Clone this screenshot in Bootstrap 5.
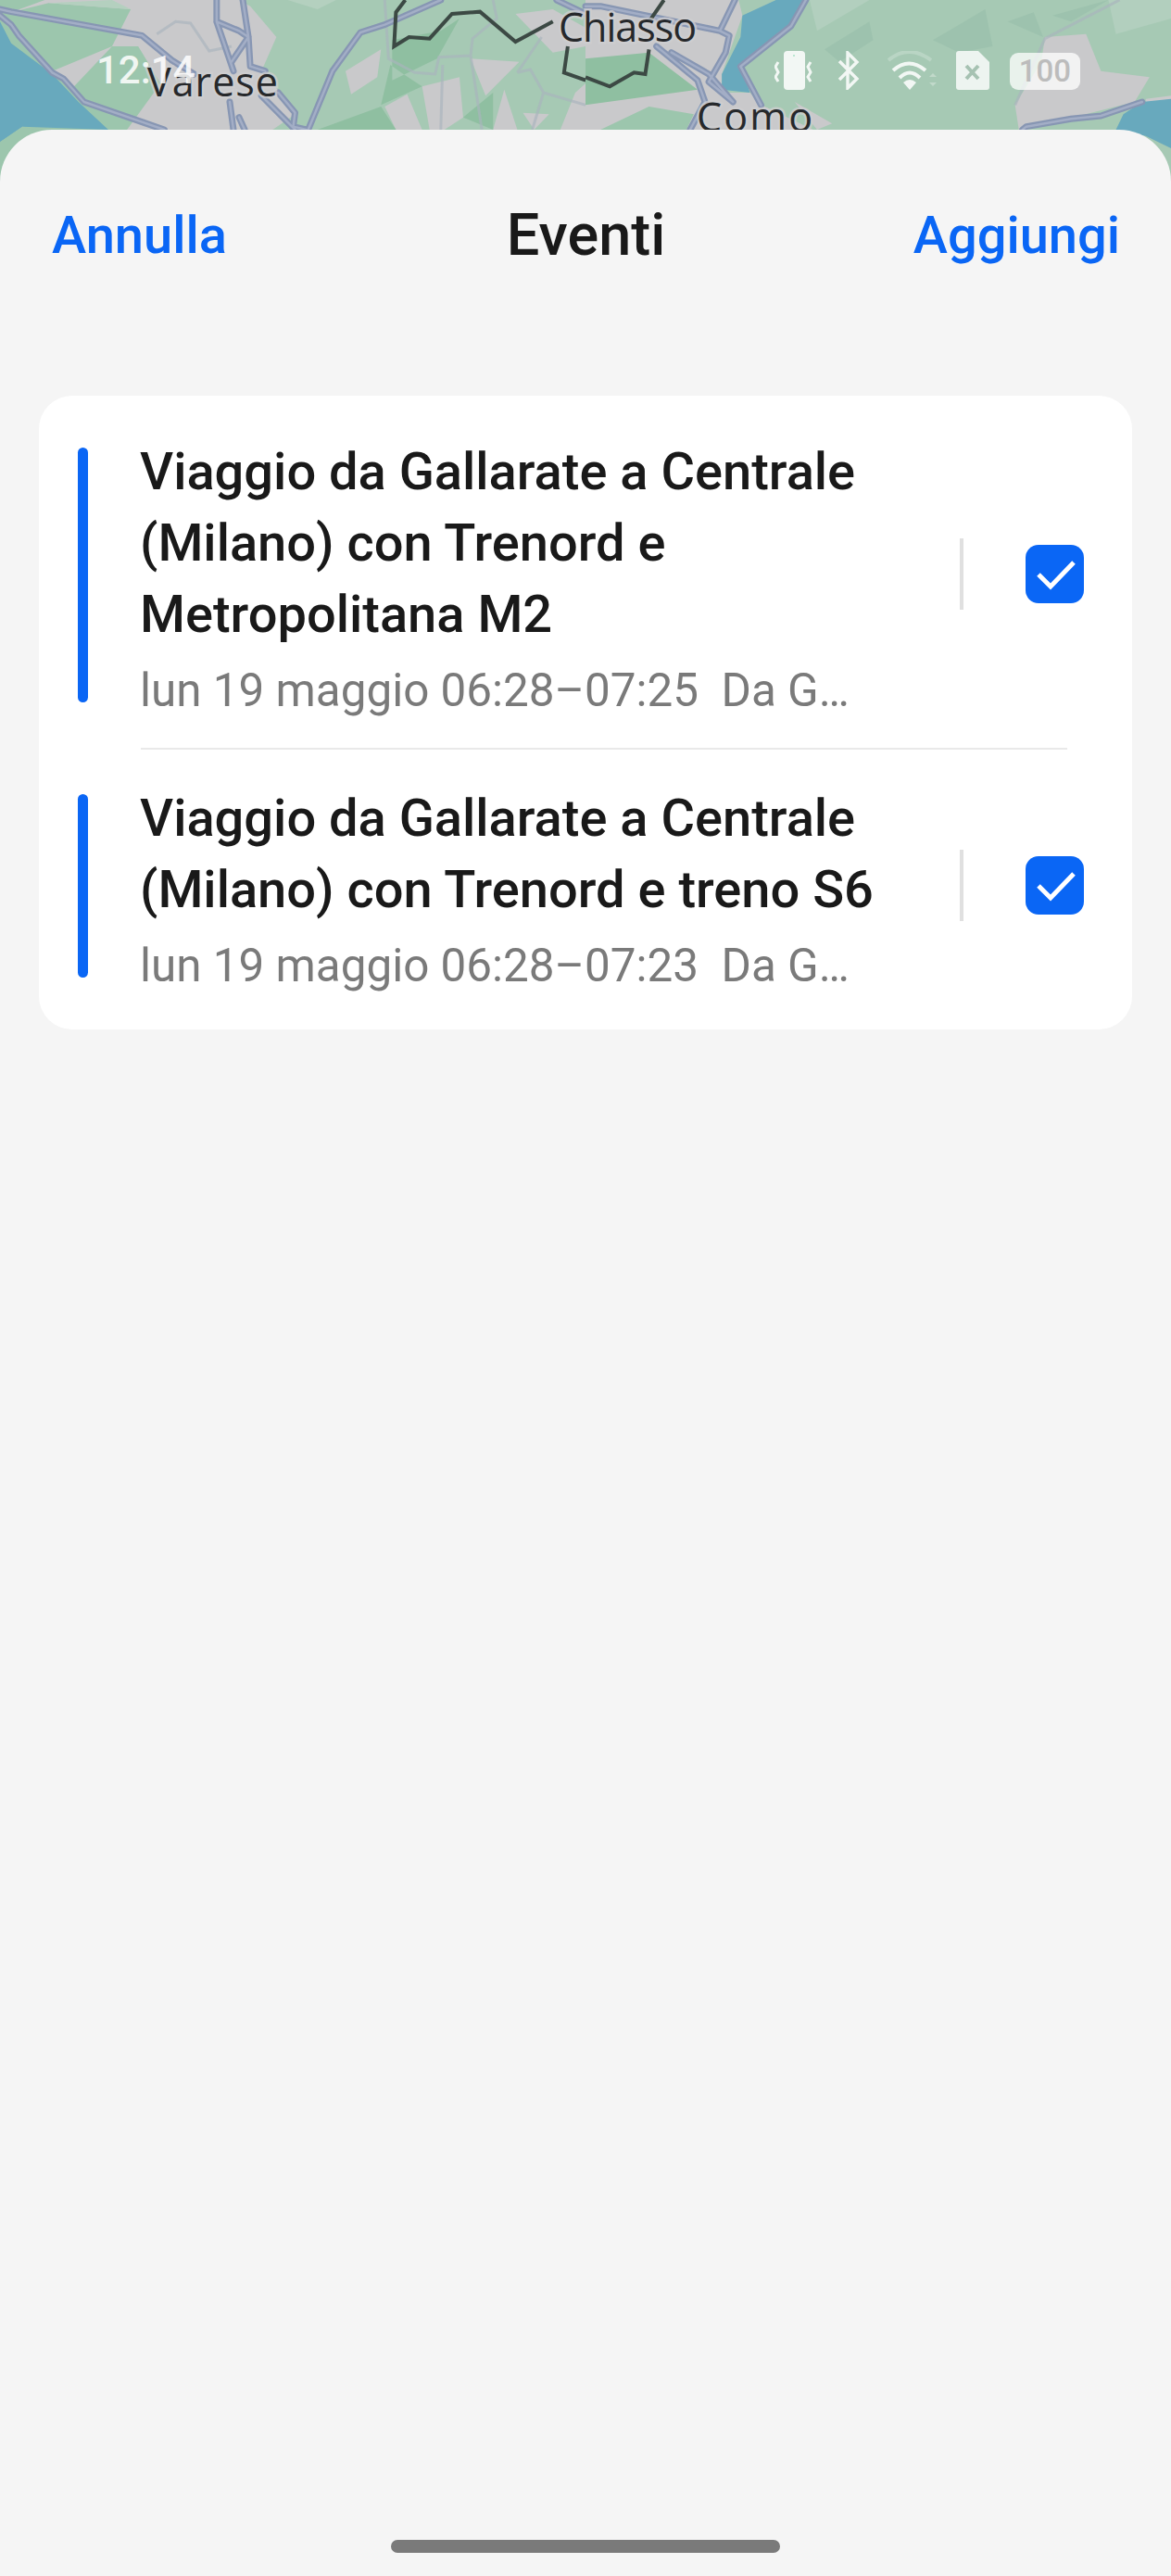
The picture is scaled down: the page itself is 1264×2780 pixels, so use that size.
<!DOCTYPE html>
<html lang="it">
<head>
    <meta charset="UTF-8">
    <meta name="viewport" content="width=device-width, initial-scale=1.0">
    <title>Eventi</title>
    <link rel="stylesheet" href="https://cdn.jsdelivr.net/npm/bootstrap@5.3.3/dist/css/bootstrap.min.css">
    <style>
        html, body { height: 2780px; overflow: hidden; }
        body {
            background: #f5f5f5;
            font-family: Roboto, "Liberation Sans", sans-serif;
            color: #191919;
        }
        .map-back { position: absolute; top: 0; left: 0; width: 1264px; height: 220px; }
        .map-back text { font-family: "Open Sans", sans-serif; font-size: 43px; fill: #26282b; stroke: #cfcfd1; stroke-width: 5px; paint-order: stroke; stroke-opacity: .75; }
        .map-back defs path { vector-effect: non-scaling-stroke; }
        .map-road { fill: none; stroke: #8796b3; stroke-width: 7; stroke-linejoin: round; stroke-linecap: round; }
        .map-road-in { fill: none; stroke: #a3aec6; stroke-width: 2.5; stroke-linejoin: round; stroke-linecap: round; }
        .map-faint { fill: none; stroke: #a9b3bd; stroke-width: 3; stroke-opacity: .65; vector-effect: non-scaling-stroke; }
        .map-border { fill: none; stroke: #3c4944; stroke-width: 4; vector-effect: non-scaling-stroke; }
        .status-row { position: absolute; top: 55px; left: 104px; width: 1062px; height: 42px; z-index: 2; color: #fff; }
        .status-time { font-size: 42px; line-height: 42px; font-weight: 500; opacity: .85; }
        .status-icons svg { display: block; height: 42px; }
        .status-batt { width: 76px; height: 40px; margin-top: 2px; background: rgba(255,255,255,.75); border-radius: 9px; color: #bcbcbc; font-size: 33px; line-height: 40px; font-weight: 500; text-align: center; }
        .sheet { position: relative; margin-top: 140px; height: 2640px; background: #f5f5f5; border-radius: 56px 56px 0 0; z-index: 1; }
        .sheet-head { padding: 79px 55px 0 56px; height: 287px; font-size: 56px; line-height: 70px; font-weight: 500; }
        .sheet-head a { color: #0a66f5; text-decoration: none; }
        .sheet-title { font-size: 63px; font-weight: 500; }
        .event-card { margin: 0 42px; background: #fff; border-radius: 36px; }
        .event-item { padding: 44px 0 35px 42px; }
        .event-line + .event-item { padding-top: 36px; padding-bottom: 42px; }
        .event-bar { flex: 0 0 11px; margin: 12px 56px 14px 0; background: #0a66f5; border-radius: 6px; }
        .event-body { width: 830px; }
        .event-name { font-size: 56px; line-height: 77px; font-weight: 500; margin: 0; }
        .event-when { font-size: 49.4px; line-height: 54px; margin-top: 16px; color: #7a7a7a; white-space: pre; }
        .event-sep { width: 4px; height: 77px; background: #e0e0e0; margin-left: 55px; margin-bottom: 4px; }
        .event-check { width: 63px; height: 63px; margin-left: 67px; margin-bottom: 4px; background: #0a66f5; border-radius: 14px; }
        .event-check svg { display: block; width: 63px; height: 63px; }
        .event-line { height: 2px; margin: 0 70px 0 110px; background: #e9e9e9; }
        .home-bar { width: 420px; height: 14px; bottom: 25px; left: 422px; position: absolute; background: #7a7a7a; border-radius: 7px; }
    </style>
</head>
<body>

<svg class="map-back" viewBox="0 0 1264 220" aria-hidden="true">
    <defs>
        <path id="roads-left" d="M0 30L30 38L380 115L460 195L520 240M0 50L30 80L50 115L140 235L170 255L225 330L380 395L440 420M580 0L580 70L625 230M650 0L665 120L670 215L710 230M580 70L640 100L665 120L620 200M615 330L625 420M640 380L655 420M700 310L790 420M745 300L790 365L785 410L820 420M825 420L890 230L965 105L1030 80L1180 0M1490 0L1568 45"/>
        <path id="roads-right" d="M400 0L360 100L385 115L375 170L330 265L395 330M590 0L550 85L415 215L470 340M190 150L300 260L320 330L280 420M230 170L330 240L395 330M0 20L40 20L360 100M1490 330L1380 375L1300 385L1180 410L1170 420"/>
    </defs>
    <rect width="1264" height="220" fill="#a6c9b4"/>
    <!-- left half, coordinates from the 2.48 / 3 crop -->
    <g transform="scale(.4032 .3333)">
        <path fill="#9cc6ad" d="M0 0H640V660H0Z"/>
        <path fill="#c9c9cb" d="M30 40L130 10L350 30L300 150L140 230L190 290L300 150L370 150L430 270L340 420H730L790 370L750 300L700 230L740 120L670 20L640 0H350L120 0Z"/>
        <path fill="#c9c9cb" d="M925 230L1020 160L1010 250L940 305Z M1030 345L1090 305L1130 420H1060Z M1130 280L1230 250L1240 380L1190 420H1150Z M1320 420L1350 290L1385 420Z M1260 190L1390 200L1300 310Z M1400 365L1470 370L1430 420Z M1380 45L1480 30L1568 90V150L1480 170L1440 120Z M1540 300L1568 270V420H1500Z M880 420L935 395L940 420Z"/>
        <path fill="#8fbfa1" d="M1050 130L1180 100L1230 60L1170 190L1050 260Z M1020 340L1130 280L1080 240L1045 210Z M850 420L1020 345L1060 420Z M1240 380L1320 300L1320 420Z"/>
        <path fill="#b4d0bf" d="M770 0H900L850 30Z M130 10L350 30L300 0Z"/>
        <path fill="#68a9bd" d="M0 70L30 140L140 240L210 330L290 420L60 410L0 460Z"/>
        <path fill="#9cc6ad" d="M0 460L60 410L130 430L0 520Z"/>
        <path class="map-faint" d="M420 110L470 70L510 75L560 165L620 150M1030 0L1040 190L1110 235L1165 240L1175 185L1260 180L1265 125L1330 60L1320 0M1260 180L1290 420M1185 210L1180 420M1385 235L1420 225L1455 300L1425 420M1455 300L1568 340M1450 120L1385 235"/>
        <use href="#roads-left" class="map-road"/>
        <use href="#roads-left" class="map-road-in"/>
        <path class="map-border" d="M1085 0L1060 40L1055 150L1095 120L1150 125L1210 45L1285 38L1380 135L1480 70M1520 150L1510 235L1568 260"/>
    </g>
    <!-- right half -->
    <g transform="translate(632 0) scale(.4032 .3333)">
        <path fill="#c9c9cb" d="M0 0H410L420 50L365 240L365 300H440L470 340L610 420H0Z"/>
        <path fill="#8fbfa1" d="M0 190L170 170L300 290L0 340Z"/>
        <path fill="#9cc6ad" d="M40 420L170 345L290 370L270 420Z"/>
        <path fill="#68a9bd" d="M510 0H590L545 90L420 215L440 300L365 290L365 240L415 120L420 50Z"/>
        <path fill="#9dc2ae" d="M640 160L760 70L770 130L680 200Z M930 130L1070 30L1090 150L1000 170Z M1130 70L1200 40L1225 120Z M1250 50L1400 0L1300 70Z"/>
        <path fill="#b2cfbe" d="M600 0H760L620 100Z M1400 0H1568V60L1420 110Z"/>
        <path fill="#c9c9cb" d="M1230 120L1340 110L1380 230L1510 250L1470 330L1240 400L1160 420L1150 340L1220 200Z M1500 320L1568 310V330H1500Z M560 330L660 400L620 420Z"/>
        <path fill="#68a9bd" d="M1420 420L1440 370L1490 330L1568 320V480L1500 440Z"/>
        <use href="#roads-right" class="map-road"/>
        <use href="#roads-right" class="map-road-in"/>
        <path class="map-faint" d="M1430 0L1230 125L1150 340"/>
        <path class="map-border" d="M210 0L170 70M170 160L160 240L130 235L65 280L0 250"/>
    </g>
    <text x="159" y="104" textLength="141">Varese</text>
    <text x="603" y="45" textLength="149">Chiasso</text>
    <text x="752" y="142" textLength="125">Como</text>
</svg>

<div class="status-row d-flex justify-content-between">
    <div class="status-time">12:14</div>
    <div class="status-icons d-flex">
        <svg viewBox="0 0 43 42" width="43" style="margin-right:25px" fill="#fff" fill-opacity=".85">
            <rect x="10" y="0" width="23" height="42" rx="4"/>
            <circle cx="21" cy="5" r="1" fill="#9db"/>
            <path d="M4 12L1 17L4 23L1 28L4 33" fill="none" stroke="#fff" stroke-opacity=".85" stroke-width="3"/>
            <path d="M39 12L36 17L39 23L36 28L39 33" fill="none" stroke="#fff" stroke-opacity=".85" stroke-width="3"/>
        </svg>
        <svg viewBox="0 0 24 42" width="24" style="margin-right:29px">
            <path d="M2 11L21 30L11 40V2L21 12L2 31" fill="none" stroke="#fff" stroke-opacity=".85" stroke-width="3.4"/>
        </svg>
        <svg viewBox="0 0 56 42" width="56" style="margin-right:19px">
            <path d="M2 10Q24 -8 48 10" fill="none" stroke="#fff" stroke-opacity=".22" stroke-width="4"/>
            <path d="M7 21Q24 6 42 21" fill="none" stroke="#fff" stroke-opacity=".85" stroke-width="4"/>
            <path d="M14 29Q25 18 36 29" fill="none" stroke="#fff" stroke-opacity=".85" stroke-width="4"/>
            <path d="M18 34Q25 28 32 34L25 42Z" fill="#fff" fill-opacity=".85"/>
            <path d="M46 28L50 24L54 28ZM46 34L50 38L54 34Z" fill="#fff" fill-opacity=".3"/>
        </svg>
        <svg viewBox="0 0 36 42" width="36" style="margin-right:22px">
            <path d="M3 0H24L36 12V39Q36 42 33 42H3Q0 42 0 39V3Q0 0 3 0Z" fill="#fff" fill-opacity=".8"/>
            <path d="M11 16L24 30M24 16L11 30" stroke="#a6c2b2" stroke-width="4"/>
        </svg>
        <div class="status-batt">100</div>
    </div>
</div>

<div class="sheet">
    <div class="sheet-head row g-0">
        <div class="col"><a href="#">Annulla</a></div>
        <div class="col-auto sheet-title">Eventi</div>
        <div class="col text-end"><a href="#">Aggiungi</a></div>
    </div>

    <div class="event-card">
        <div class="event-item d-flex align-items-stretch">
            <div class="event-bar"></div>
            <div class="event-body">
                <p class="event-name">Viaggio da Gallarate a Centrale (Milano) con Trenord e Metropolitana M2</p>
                <div class="event-when">lun 19 maggio 06:28–07:25  Da G…</div>
            </div>
            <div class="event-sep align-self-center"></div>
            <div class="event-check align-self-center">
                <svg viewBox="0 0 63 63"><path d="M14 32L27 45L52 19" fill="none" stroke="#fff" stroke-width="5"/></svg>
            </div>
        </div>
        <div class="event-line"></div>
        <div class="event-item d-flex align-items-stretch">
            <div class="event-bar"></div>
            <div class="event-body">
                <p class="event-name">Viaggio da Gallarate a Centrale (Milano) con Trenord e treno S6</p>
                <div class="event-when">lun 19 maggio 06:28–07:23  Da G…</div>
            </div>
            <div class="event-sep align-self-center"></div>
            <div class="event-check align-self-center">
                <svg viewBox="0 0 63 63"><path d="M14 32L27 45L52 19" fill="none" stroke="#fff" stroke-width="5"/></svg>
            </div>
        </div>
    </div>

    <div class="home-bar"></div>
</div>

<script src="https://cdn.jsdelivr.net/npm/bootstrap@5.3.3/dist/js/bootstrap.bundle.min.js"></script>
</body>
</html>
